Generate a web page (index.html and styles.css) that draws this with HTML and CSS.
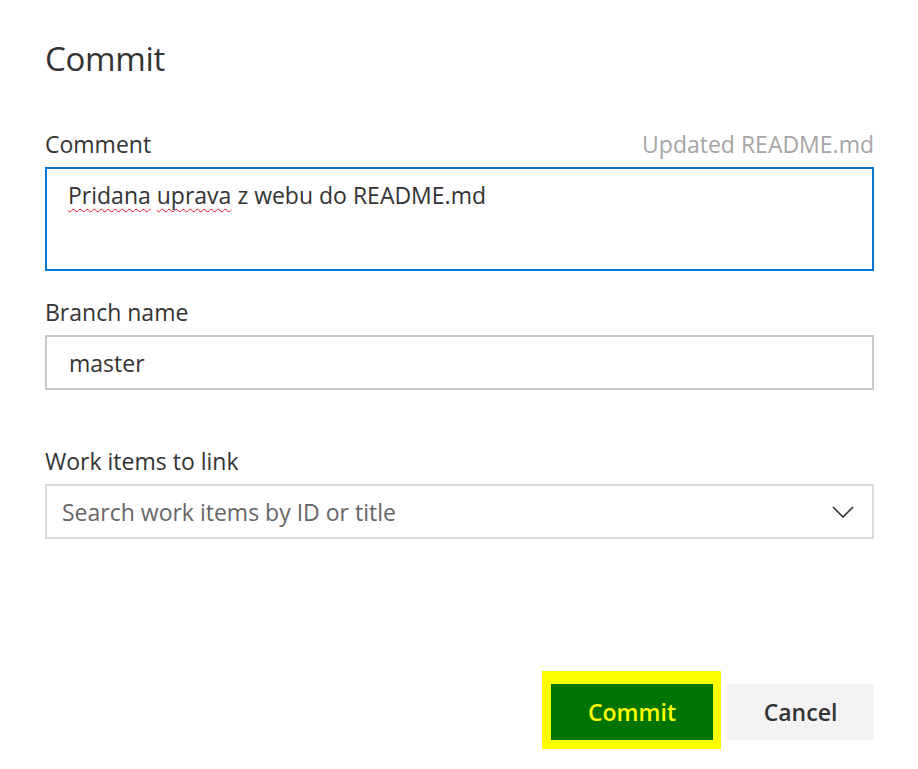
FILE: index.html
```html
<!DOCTYPE html>
<html lang="en">
<head>
<meta charset="utf-8">
<title>Commit</title>
<link rel="stylesheet" href="styles.css">
</head>
<body>
<main class="dialog">
  <h1 class="title">Commit</h1>

  <section class="field field-comment">
    <div class="label-row">
      <label class="label">Comment</label>
      <span class="hint">Updated README.md</span>
    </div>
    <div class="textarea"><span class="misspelled">Pridana</span> <span class="misspelled">uprava</span> z webu do README.md</div>
  </section>

  <section class="field field-branch">
    <div class="label-row">
      <label class="label">Branch name</label>
    </div>
    <div class="input">master</div>
  </section>

  <section class="field field-work">
    <div class="label-row">
      <label class="label">Work items to link</label>
    </div>
    <div class="dropdown">
      <span class="placeholder">Search work items by ID or title</span>
      <svg class="chevron" width="22" height="12" viewBox="0 0 22 12"><path d="M1 1 L11 11 L21 1" fill="none" stroke="#333" stroke-width="1.6"/></svg>
    </div>
  </section>

  <div class="actions">
    <div class="highlight"><button class="btn btn-primary">Commit</button></div>
    <button class="btn btn-secondary">Cancel</button>
  </div>
</main>
</body>
</html>
```
FILE: styles.css
```css
html, body {
  margin: 0;
  padding: 0;
  background: #ffffff;
}
body {
  font-family: "Open Sans", "Noto Sans", sans-serif;
  color: #333333;
}
.dialog {
  width: 829px;
  padding: 0 0 0 45px;
  display: flex;
  flex-direction: column;
}
.title {
  margin: 36px 0 0 0;
  font-size: 33px;
  font-weight: 400;
  line-height: 46px;
  color: #333;
  letter-spacing: -0.3px;
}
.label-row {
  display: flex;
  justify-content: space-between;
  align-items: baseline;
  height: 30px;
  line-height: 30px;
}
.label {
  font-size: 23px;
  color: #333;
}
.hint {
  font-size: 23px;
  color: #a6a6a6;
}
.field-comment { margin-top: 47px; }
.field-comment .label-row { margin-bottom: 8px; }
.textarea {
  box-sizing: border-box;
  height: 104px;
  border: 2px solid #0078d4;
  padding: 8px 21px;
  font-size: 23px;
  line-height: 36px;
}
.misspelled {
  text-decoration: underline wavy #e81123;
  text-decoration-thickness: 1.3px;
  text-underline-offset: 4px;
  text-decoration-skip-ink: none;
}
.field-branch { margin-top: 26px; }
.field-branch .label-row { margin-bottom: 8px; }
.input {
  box-sizing: border-box;
  height: 55px;
  border: 2px solid #c8c8c8;
  padding: 0 22px;
  font-size: 23px;
  line-height: 53px;
}
.field-work { margin-top: 56px; }
.field-work .label-row { margin-bottom: 8px; }
.dropdown {
  box-sizing: border-box;
  height: 55px;
  border: 2px solid #dadada;
  padding: 0 18px 0 15px;
  display: flex;
  align-items: center;
  justify-content: space-between;
}
.placeholder {
  font-size: 23px;
  color: #666666;
}
.chevron { display: block; }
.actions {
  margin-top: 145px;
  display: flex;
  justify-content: flex-end;
  align-items: flex-start;
  gap: 6px;
}
.highlight {
  background: #ffff00;
  padding: 13px 8px 9px 9px;
  margin-top: -13px;
}
.btn {
  border: none;
  margin: 0;
  height: 56px;
  font-family: "Open Sans", "Noto Sans", sans-serif;
  font-size: 23px;
  font-weight: 600;
  cursor: pointer;
}
.btn-primary {
  width: 162px;
  background: #007400;
  color: #ffff00;
}
.btn-secondary {
  width: 147px;
  background: #f3f3f3;
  color: #333;
}
```
